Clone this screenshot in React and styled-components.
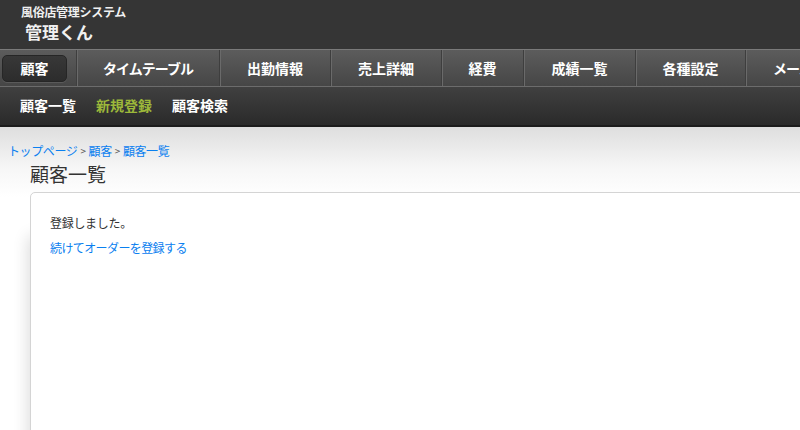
import styled, { createGlobalStyle } from 'styled-components';

const GlobalStyle = createGlobalStyle`
	html, body {
		margin: 0;
		padding: 0;
		background: #fff;
	}
	body {
		font-family: "Noto Sans CJK JP", "Noto Sans", sans-serif;
		overflow: hidden;
	}
`;

const Page = styled.div`
	width: 800px;
	height: 430px;
	display: flex;
	flex-direction: column;
	overflow: hidden;
`;

const Header = styled.header`
	height: 49px;
	box-sizing: border-box;
	background: #353535;
	padding: 5px 0 0 21px;
	display: flex;
	flex-direction: column;
	gap: 3px;
	color: #f0f0f0;
`;
const SystemName = styled.div`
	font-size: 12px;
	font-weight: bold;
	line-height: 14px;
	letter-spacing: -0.3px;
`;
const AppName = styled.div`
	font-size: 17px;
	font-weight: bold;
	line-height: 19px;
	margin-left: 4px;
`;

const Nav = styled.nav`
	height: 38px;
	box-sizing: border-box;
	border-top: 1px solid #7a7a7a;
	border-bottom: 1px solid #6c6c6c;
	background: linear-gradient(#5c5c5c, #464646);
	display: flex;
	overflow: hidden;
`;
const NavItem = styled.div`
	flex: 0 0 ${(p) => p.$w}px;
	box-sizing: border-box;
	display: flex;
	align-items: center;
	justify-content: ${(p) => (p.$first ? 'flex-start' : 'center')};
	padding-left: ${(p) => (p.$first ? '2px' : '0')};
	border-left: ${(p) => (p.$first ? 'none' : '1px solid #3e3e3e')};
	box-shadow: ${(p) => (p.$first ? 'none' : 'inset 1px 0 0 #6a6a6a')};
	color: #fff;
	font-size: 14px;
	font-weight: bold;
	white-space: nowrap;
	letter-spacing: ${(p) => p.$ls || 0}px;
`;
const ActiveTab = styled.span`
	width: 65px;
	height: 27px;
	box-sizing: border-box;
	display: flex;
	align-items: center;
	justify-content: center;
	border-radius: 5px;
	background: linear-gradient(#383838, #2c2c2c);
	border: 1px solid #262626;
	box-shadow: 0 1px 0 #5a5a5a;
`;

const SubNav = styled.div`
	height: 40px;
	box-sizing: border-box;
	background: linear-gradient(#404040, #2a2a2a);
	border-bottom: 2px solid #1c1c1c;
	display: flex;
	align-items: center;
	gap: 20px;
	padding: 0 0 2px 20px;
`;
const SubLink = styled.span`
	font-size: 14px;
	font-weight: bold;
	color: ${(p) => (p.$active ? '#9cb83a' : '#fff')};
`;

const Main = styled.main`
	flex: 1;
	background: linear-gradient(#dedede, #f6f6f6 40px, #fff 70px);
	padding: 17px 0 0 8px;
	display: flex;
	flex-direction: column;
`;
const Breadcrumb = styled.div`
	font-size: 12px;
	line-height: 14px;
	color: #0a80f0;
	display: flex;
	gap: 3px;
	align-items: center;
	letter-spacing: -0.4px;
`;
const Sep = styled.span`
	color: #555;
	font-size: 10px;
`;
const Heading = styled.h1`
	margin: 4px 0 0 22px;
	font-size: 19px;
	line-height: 24px;
	font-weight: normal;
	color: #333;
`;
const Card = styled.div`
	flex: 1;
	margin: 6px -10px -10px 22px;
	background: #fff;
	border: 1px solid #d4d4d4;
	border-radius: 5px;
	padding: 23px 19px;
	box-shadow: -6px 40px 16px -4px rgba(0, 0, 0, 0.14);
`;
const Message = styled.p`
	margin: 0;
	font-size: 12px;
	line-height: 14px;
	color: #333;
	letter-spacing: -0.3px;
`;
const NextLink = styled.a`
	display: block;
	margin-top: 11px;
	font-size: 12px;
	line-height: 14px;
	color: #0a80f0;
	text-decoration: none;
	letter-spacing: -0.6px;
`;

const menu = [
	{ label: 'タイムテーブル', w: 143, ls: -1 },
	{ label: '出勤情報', w: 111 },
	{ label: '売上詳細', w: 111 },
	{ label: '経費', w: 82 },
	{ label: '成績一覧', w: 112 },
	{ label: '各種設定', w: 110 },
	{ label: 'メール設定', w: 120, ls: -1 },
];

function App() {
	return (
		<Page>
			<GlobalStyle />
			<Header>
				<SystemName>風俗店管理システム</SystemName>
				<AppName>管理くん</AppName>
			</Header>
			<Nav>
				<NavItem $first $w={76}>
					<ActiveTab>顧客</ActiveTab>
				</NavItem>
				{menu.map((m) => (
					<NavItem key={m.label} $w={m.w} $ls={m.ls}>
						{m.label}
					</NavItem>
				))}
			</Nav>
			<SubNav>
				<SubLink>顧客一覧</SubLink>
				<SubLink $active>新規登録</SubLink>
				<SubLink>顧客検索</SubLink>
			</SubNav>
			<Main>
				<Breadcrumb>
					<span>トップページ</span>
					<Sep>&gt;</Sep>
					<span>顧客</span>
					<Sep>&gt;</Sep>
					<span>顧客一覧</span>
				</Breadcrumb>
				<Heading>顧客一覧</Heading>
				<Card>
					<Message>登録しました。</Message>
					<NextLink href="#">続けてオーダーを登録する</NextLink>
				</Card>
			</Main>
		</Page>
	);
}

export default App;
